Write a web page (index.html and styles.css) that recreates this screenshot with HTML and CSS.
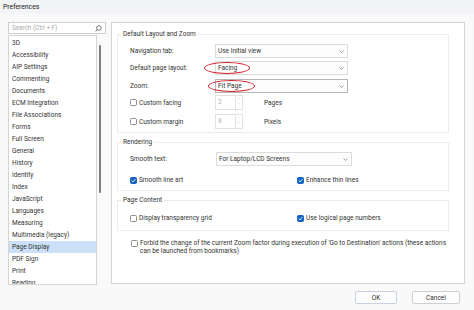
FILE: index.html
```html
<!DOCTYPE html>
<html>
<head>
<meta charset="utf-8">
<link rel="stylesheet" href="styles.css">
</head>
<body>
<div class="window">
  <div class="titlebar">Preferences</div>
  <div class="main">
    <div class="sidebar">
      <div class="search">
        <span class="placeholder">Search (Ctrl + F)</span>
        <svg class="mag" width="7" height="7" viewBox="0 0 7 7"><circle cx="3.9" cy="3" r="2.3" fill="none" stroke="#555" stroke-width="0.8"/><line x1="2.2" y1="4.7" x2="0.6" y2="6.4" stroke="#555" stroke-width="0.9"/></svg>
      </div>
      <div class="list-wrap">
        <ul class="items">
          <li>3D</li>
          <li>Accessibility</li>
          <li>AIP Settings</li>
          <li>Commenting</li>
          <li>Documents</li>
          <li>ECM Integration</li>
          <li>File Associations</li>
          <li>Forms</li>
          <li>Full Screen</li>
          <li>General</li>
          <li>History</li>
          <li>Identity</li>
          <li>Index</li>
          <li>JavaScript</li>
          <li>Languages</li>
          <li>Measuring</li>
          <li>Multimedia (legacy)</li>
          <li class="selected">Page Display</li>
          <li>PDF Sign</li>
          <li>Print</li>
          <li>Reading</li>
        </ul>
        <div class="scrollbar"><div class="thumb"></div></div>
      </div>
    </div>
    <div class="content">
      <fieldset class="group g-layout">
        <legend>Default Layout and Zoom</legend>
        <div class="row row-nav">
          <span class="label">Navigation tab:</span>
          <div class="select">Use Initial view<svg class="chev" width="5" height="3" viewBox="0 0 5 3"><polyline points="0.5,0.5 2.5,2.5 4.5,0.5" fill="none" stroke="#777" stroke-width="0.7"/></svg></div>
        </div>
        <div class="row row-layout">
          <span class="label">Default page layout:</span>
          <div class="select">Facing<svg class="chev" width="5" height="3" viewBox="0 0 5 3"><polyline points="0.5,0.5 2.5,2.5 4.5,0.5" fill="none" stroke="#777" stroke-width="0.7"/></svg><span class="ring ring-facing"></span></div>
        </div>
        <div class="row row-zoom">
          <span class="label">Zoom:</span>
          <div class="select focus">Fit Page<svg class="chev" width="5" height="3" viewBox="0 0 5 3"><polyline points="0.5,0.5 2.5,2.5 4.5,0.5" fill="none" stroke="#777" stroke-width="0.7"/></svg><span class="ring ring-fit"></span></div>
        </div>
        <div class="row row-spin1">
          <span class="label check-label"><span class="cb"></span>Custom facing</span>
          <div class="spin"><span class="spin-val">2</span><span class="spin-btns"><span>&#708;</span><span>&#709;</span></span></div>
          <span class="unit">Pages</span>
        </div>
        <div class="row row-spin2">
          <span class="label check-label"><span class="cb"></span>Custom margin</span>
          <div class="spin"><span class="spin-val">8</span><span class="spin-btns"><span>&#708;</span><span>&#709;</span></span></div>
          <span class="unit">Pixels</span>
        </div>
      </fieldset>

      <fieldset class="group g-render">
        <legend>Rendering</legend>
        <div class="row row-smooth">
          <span class="label">Smooth text:</span>
          <div class="select wide">For Laptop/LCD Screens<svg class="chev" width="5" height="3" viewBox="0 0 5 3"><polyline points="0.5,0.5 2.5,2.5 4.5,0.5" fill="none" stroke="#777" stroke-width="0.7"/></svg></div>
        </div>
        <div class="row pair">
          <span class="check-label col1"><span class="cb checked"><svg width="7" height="7" viewBox="0 0 7 7"><polyline points="1.7,3.6 3,4.8 5.4,2.2" fill="none" stroke="#fff" stroke-width="0.9"/></svg></span>Smooth line art</span>
          <span class="check-label col2"><span class="cb checked"><svg width="7" height="7" viewBox="0 0 7 7"><polyline points="1.7,3.6 3,4.8 5.4,2.2" fill="none" stroke="#fff" stroke-width="0.9"/></svg></span>Enhance thin lines</span>
        </div>
      </fieldset>

      <fieldset class="group g-content">
        <legend>Page Content</legend>
        <div class="row pair">
          <span class="check-label col1"><span class="cb"></span>Display transparency grid</span>
          <span class="check-label col2"><span class="cb checked"><svg width="7" height="7" viewBox="0 0 7 7"><polyline points="1.7,3.6 3,4.8 5.4,2.2" fill="none" stroke="#fff" stroke-width="0.9"/></svg></span>Use logical page numbers</span>
        </div>
      </fieldset>

      <div class="forbid">
        <span class="cb"></span>
        <p>Forbid the change of the current Zoom factor during execution of 'Go to Destination' actions (these actions<br>can be launched from bookmarks)</p>
      </div>
    </div>
  </div>
  <div class="footer">
    <button class="btn ok">OK</button>
    <button class="btn">Cancel</button>
  </div>
</div>
</body>
</html>
```

FILE: styles.css
```css
* { box-sizing: border-box; }
html, body { margin: 0; padding: 0; }
body {
  width: 474px;
  height: 310px;
  overflow: hidden;
  background: #f9f9f9;
  font-family: Roboto, "Noto Sans", sans-serif;
  font-size: 6.5px;
  color: #333;
}
.window { width: 474px; height: 310px; display: flex; flex-direction: column; }
.titlebar {
  height: 14px;
  line-height: 14px;
  padding-left: 3px;
  background: #f2f4f7;
  font-size: 6.8px;
  color: #222;
}
.main {
  display: flex;
  padding: 8px 0 0 8px;
  height: 271px;
}
.sidebar { width: 98px; display: flex; flex-direction: column; }
.search {
  height: 12px;
  border: 1px solid #cfcfcf;
  background: #fff;
  display: flex;
  align-items: center;
  justify-content: space-between;
  padding: 0 3px 0 3px;
}
.placeholder { color: #aaa; font-size: 6.3px; }
.mag { display: block; }
.list-wrap {
  margin-top: 1px;
  height: 250px;
  display: flex;
}
.items {
  list-style: none;
  margin: 0;
  padding: 1px 0 0 0;
  width: 89px;
  height: 250px;
  overflow: hidden;
  border: 1px solid #d4d4d4;
  background: #fff;
}
.items li {
  height: 12px;
  line-height: 12px;
  padding-left: 3px;
  white-space: nowrap;
}
.items li.selected { background: #cce1f8; }
.scrollbar { flex: 1; display: flex; justify-content: flex-start; padding: 10px 0 0 2px; }
.thumb { width: 1.5px; height: 148px; background: #7e7e7e; border-radius: 1px; }

.content {
  margin-left: 5px;
  width: 354px;
  height: 262px;
  border: 1px solid #d4d4d4;
  background: #fff;
  padding: 7px 0 0 5px;
}
.group {
  margin: 0;
  width: 332px;
  border: 1px solid #ececec;
  padding: 0;
}
.group legend {
  padding: 0 2px;
  margin-left: 3px;
  line-height: 8px;
}
.group > .row { padding-left: 12px; }
.g-layout { height: 103px; }
.g-render { height: 53px; margin-top: 5px; }
.g-content { height: 35px; margin-top: 5px; }

.row { display: flex; align-items: center; }
.label { width: 85px; flex: none; }
.select {
  position: relative;
  width: 133px;
  height: 14px;
  border: 1px solid #dcdcdc;
  background: #fdfdfd;
  display: flex;
  align-items: center;
  justify-content: space-between;
  padding: 0 3px 0 2px;
}
.select.focus { border-color: #b5b5b5; }
.select.wide { width: 136px; margin-left: 1px; }
.chev { display: block; }
.row-nav { margin-top: 6px; }
.row-layout { margin-top: 3px; }
.row-zoom { margin-top: 4px; }
.row-spin1 { margin-top: 2px; }
.row-spin2 { margin-top: 4px; }

.ring {
  position: absolute;
  border: 1.6px solid #d4202a;
  border-radius: 50%;
}
.ring-facing { left: -12px; top: 0px; width: 46px; height: 12px; }
.ring-fit { left: -8px; top: 0px; width: 47px; height: 12px; }

.check-label { display: flex; align-items: center; white-space: nowrap; }
.cb {
  width: 7px; height: 7px;
  border: 1px solid #8d8d8d;
  border-radius: 1.5px;
  background: #fff;
  margin-right: 2px;
  flex: none;
  display: flex;
}
.cb.checked { background: #1565c0; border-color: #1565c0; }
.cb.checked svg { margin: -1px; }

.spin {
  height: 15px;
  width: 28px;
  display: flex;
  border: 1px solid #e2e2e2;
  background: #fff;
}
.spin-val { flex: 1; color: #b0b0b0; padding-left: 2px; line-height: 12px; }
.spin-btns {
  width: 7px;
  border-left: 1px solid #e2e2e2;
  display: flex;
  flex-direction: column;
  align-items: center;
  justify-content: center;
  color: #aaa;
  font-size: 5px;
  line-height: 5px;
}
.unit { margin-left: 21px; }

.row-smooth { margin-top: 6px; }
.pair { margin-top: 10px; }
.g-content .pair { margin-top: 10px; }
.col1 { width: 167px; }

.forbid {
  display: flex;
  align-items: flex-start;
  margin: 8px 0 0 14px;
  width: 330px;
}
.forbid .cb { margin-top: 0.5px; margin-right: 2px; }
.forbid p { margin: 0; line-height: 8px; white-space: nowrap; }

.footer {
  display: flex;
  justify-content: flex-end;
  gap: 15px;
  padding: 6px 14px 0 0;
}
.btn {
  font-family: inherit;
  font-size: 6.5px;
  color: #333;
  height: 13px;
  padding: 0;
  border: 1px solid #d0d0d0;
  border-radius: 2px;
  background: #fdfdfd;
}
.btn.ok { width: 42px; border-color: #c8d2de; }
.btn:not(.ok) { width: 48px; }
```
